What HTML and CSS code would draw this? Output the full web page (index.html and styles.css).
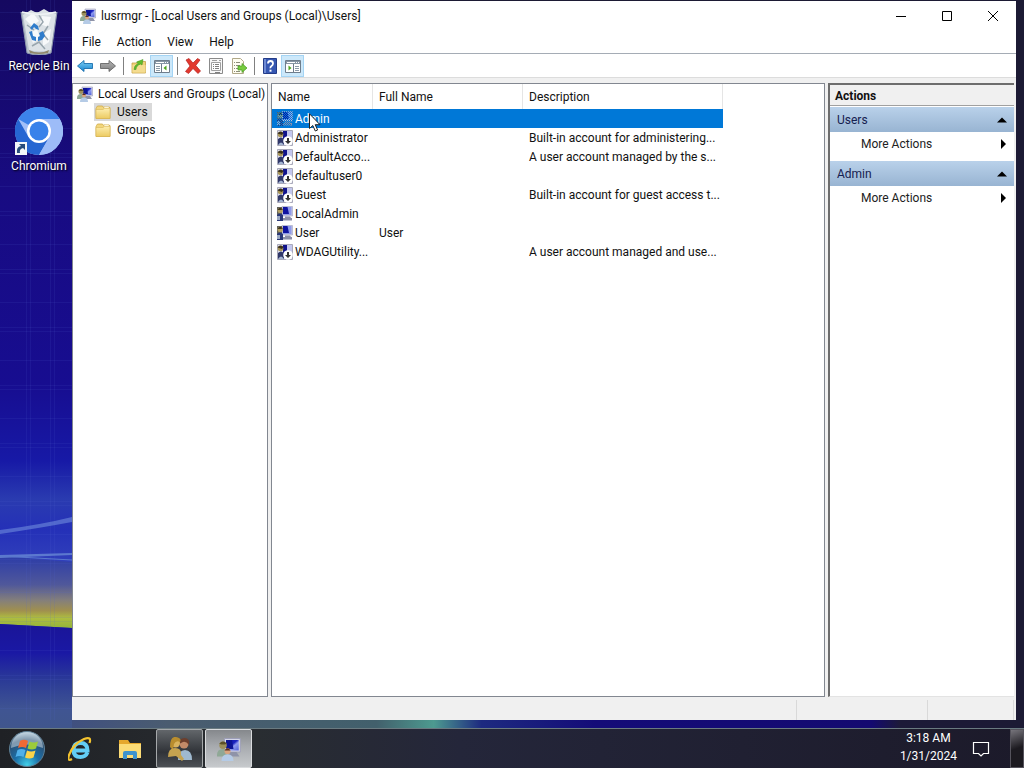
FILE: index.html
```html
<!DOCTYPE html>
<html lang="en">
  <head>
    <meta charset="UTF-8" />
    <meta name="viewport" content="width=device-width, initial-scale=1.0" />
    <title>lusrmgr - [Local Users and Groups (Local)\Users]</title>
    <link rel="stylesheet" href="styles.css">
  </head>
  <body>
    <!-- shared icons -->
    <svg class="sprite" aria-hidden="true">
      <defs>
        <linearGradient id="gScreen" x1="0" y1="0" x2="1" y2="1">
          <stop offset="0" stop-color="#0a14a8" />
          <stop offset=".45" stop-color="#1a22c0" />
          <stop offset=".6" stop-color="#8f9cf0" />
          <stop offset="1" stop-color="#5060d8" />
        </linearGradient>
        <linearGradient id="gFolder" x1="0" y1="0" x2="0" y2="1">
          <stop offset="0" stop-color="#fdeeb0" />
          <stop offset="1" stop-color="#eccb62" />
        </linearGradient>
        <linearGradient id="gBack" x1="0" y1="0" x2="0" y2="1">
          <stop offset="0" stop-color="#7fd0f5" />
          <stop offset="1" stop-color="#1583cf" />
        </linearGradient>
        <linearGradient id="gForward" x1="0" y1="0" x2="0" y2="1">
          <stop offset="0" stop-color="#b5b5b5" />
          <stop offset="1" stop-color="#7d7d7d" />
        </linearGradient>
        <radialGradient id="gOrb" cx=".5" cy=".95" r=".9">
          <stop offset="0" stop-color="#42d0e8" />
          <stop offset=".4" stop-color="#1b6fa8" />
          <stop offset=".8" stop-color="#2c4f72" />
          <stop offset="1" stop-color="#9fb8ca" />
        </radialGradient>
        <pattern id="pDither" width="2" height="2" patternUnits="userSpaceOnUse">
          <path d="M0 0h1v1H0zM1 1h1v1H1z" fill="#0078d7" />
        </pattern>
      </defs>
      <symbol id="user" viewBox="0 0 16 16">
        <path d="M5 1h10.500v9H5z" fill="#d4d6e8" stroke="#9a9cb8" stroke-width=".6" />
        <path d="M6 2h8.500v7H6z" fill="url(#gScreen)" />
        <path d="M6 2h4l1 6H6z" fill="#0c1494" />
        <path d="M8 10h5l2 3H8z" fill="#8f93a8" />
        <circle cx="4" cy="5.500" r="2.500" fill="#9c905c" />
        <path d="M1.500 4.500Q4 1.500 6.500 4.500L5 5H3z" fill="#5c5028" />
        <path d="M0 12q0-4 4-4t4 4v1H0z" fill="#8fa896" />
        <circle cx="7" cy="9.500" r="2" fill="#d8a480" />
        <path d="M5 9Q7 6 9 9z" fill="#5a3020" />
        <path d="M3 16q0-4.500 4-4.500t4 4.500z" fill="#b5cbe6" />
      </symbol>
      <symbol id="account" viewBox="0 0 16 16">
        <path d="M5 .5h10.500v9.500H5z" fill="#c9cae6" stroke="#a0a2c0" stroke-width=".6" />
        <path d="M6 1h8.500v8H6z" fill="#8f9ae8" />
        <path d="M6 1h4.500l1.500 7H6z" fill="#1014a0" />
        <path d="M8 10.500h5l1 1.500h1v2.500H6V12h2z" fill="#8a8ea8" />
        <path d="M0 1h5v8H0z" fill="#60605c" />
        <circle cx="3.200" cy="4.500" r="2.700" fill="#b3a064" />
        <path d="M.5 4Q3 0 6 3.500L4 4z" fill="#40351c" />
        <path d="M0 9q3-3 6 0v6H0z" fill="#293778" />
        <path d="M0 10h3v4H0z" fill="#9ba8c2" />
      </symbol>
      <symbol id="disabled" viewBox="0 0 16 16">
        <path d="M.5.500h15v15H.5z" fill="#dfdfea" stroke="#a9a9ba" />
        <path d="M7 1h8v7H7z" fill="#c3c7ee" />
        <path d="M6 1h4v8H6z" fill="#10138c" />
        <circle cx="3.500" cy="4.500" r="2.800" fill="#a89658" />
        <path d="M.5 3.500Q3 0 6.500 3L5 5z" fill="#3a301c" />
        <path d="M1 9q3-3 6 0v6H1z" fill="#30386a" />
        <path d="M1 15q3-5 6 0z" fill="#a5b5d2" />
        <circle cx="11" cy="11" r="4.800" fill="#fff" />
        <path d="M10 8h2v3h2L11 14l-3-3h2z" fill="#333" />
      </symbol>
      <symbol id="folder" viewBox="0 0 16 16">
        <path d="M1 4.500V14.500h14V3.500H8.500L7.500 2H2.500L1.500 3.500z" fill="#f2d67c" stroke="#cfa945" stroke-width=".8" />
        <path d="M9 2.500h5v2H9z" fill="#fffbe8" stroke="#d9bb66" stroke-width=".5" />
        <path d="M1 5.500h7l1.500-1.200H15v10.200H1z" fill="url(#gFolder)" stroke="#d9b555" stroke-width=".6" />
      </symbol>
    </svg>

    <div class="desktop">
      <svg class="wallpaper" viewBox="0 0 1024 768" preserveAspectRatio="none" aria-hidden="true">
        <defs>
          <linearGradient id="wSky" x1="0" y1="0" x2="0" y2="1">
            <stop offset="0" stop-color="#150960" />
            <stop offset=".25" stop-color="#180b82" />
            <stop offset=".5" stop-color="#170d90" />
            <stop offset=".6" stop-color="#1719a6" />
            <stop offset=".65" stop-color="#2a3bb0" />
            <stop offset=".69" stop-color="#2430b8" />
            <stop offset=".74" stop-color="#3443bb" />
            <stop offset="1" stop-color="#3443bb" />
          </linearGradient>
          <linearGradient id="wGold" x1="0" y1="0" x2="0" y2="1">
            <stop offset="0" stop-color="#2c3ca8" />
            <stop offset=".4" stop-color="#50589a" />
            <stop offset=".62" stop-color="#85807a" />
            <stop offset=".76" stop-color="#a0904e" />
            <stop offset=".86" stop-color="#aebd40" />
            <stop offset="1" stop-color="#94b43a" />
          </linearGradient>
          <linearGradient id="wSea" x1="0" y1="0" x2="0" y2="1">
            <stop offset="0" stop-color="#1a1598" />
            <stop offset=".2" stop-color="#1a18a4" />
            <stop offset=".4" stop-color="#2c3c96" />
            <stop offset=".6" stop-color="#405592" />
            <stop offset="1" stop-color="#405880" />
          </linearGradient>
          <linearGradient id="wFloor" x1="0" y1="0" x2="1" y2="0">
            <stop offset="0" stop-color="#405080" />
            <stop offset=".1" stop-color="#4a5c70" />
            <stop offset=".32" stop-color="#42606c" />
            <stop offset=".38" stop-color="#4d9a90" />
            <stop offset=".43" stop-color="#1d2a80" />
            <stop offset=".55" stop-color="#140c78" />
            <stop offset=".84" stop-color="#140a70" />
            <stop offset=".87" stop-color="#1c1a38" />
            <stop offset="1" stop-color="#1c1a34" />
          </linearGradient>
          <pattern id="wWeave" width="72" height="58" patternUnits="userSpaceOnUse">
            <path d="M26.500 0v58M30.500 0v58M50.500 0v58M54.500 0v58M0 12.500h72M0 37.500h72M0 41.500h72" stroke="#5560d0" stroke-opacity=".12" />
          </pattern>
        </defs>
        <path d="M0 0h1024v768H0z" fill="url(#wSky)" />
        <path d="M0 556L72 562V628L0 624z" fill="url(#wGold)" />
        <path d="M0 624L72 628V768H0z" fill="url(#wSea)" />
        <path d="M0 0h72v720H0z" fill="url(#wWeave)" />
        <path d="M0 530Q40 525 72 517V522Q40 528 0 534z" fill="#6f8cdc" fill-opacity=".6" />
        <path d="M0 555L72 553V555L0 558z" fill="#6888d4" fill-opacity=".8" />
        <path d="M0 556L72 560" stroke="#5a78cc" />
        <path d="M72 720h952v48H72z" fill="url(#wFloor)" />
        <path d="M1012 0h12v768h-12zM72 0h952v2H72z" fill="#1c1a34" />
      </svg>

      <main class="workspace">
        <nav class="shortcuts" aria-label="Desktop">
          <button class="shortcut" type="button">
            <svg class="shortcut-icon" viewBox="0 0 48 48" aria-hidden="true">
              <path d="M6 5L42 5L36 46Q24 50 12 46z" fill="#b9c2cc" />
              <path d="M8 8L16 3L22 6L29 2L34 5L41 7L36 43Q24 46 14 43z" fill="#dce2e6" />
              <path d="M10 12L18 6L24 14L17 19zM27 9L36 10L33 20L25 17zM14 27L22 22L25 31L18 36zM28 26L36 22L34 35L28 39z" fill="#f7f9fa" />
              <path d="M24 8L28 15L24 20M12 18L19 23M33 19L28 27L33 33M17 39L24 35L30 42" fill="none" stroke="#98a5ad" stroke-width="1.500" />
              <path d="M15 21l4-5 4 3 1 4-3-1-2-2-2 3zM14 25l3-1 1 5 3 1v4l-4-1zM24 26l4-2 2 5-3 4-4 1v-4l2-1z" fill="#2f7ccb" />
              <path d="M7 5Q24 10 41 5" fill="none" stroke="#eef2f4" stroke-width="1.500" />
              <path d="M6 5L12 46Q24 50 36 46L42 5" fill="none" stroke="#8e99ad" />
              <path d="M14 43Q24 48 34 43L33 46Q24 48 15 46z" fill="#91886b" />
            </svg>
            Recycle Bin
          </button>
          <button class="shortcut" type="button">
            <svg class="shortcut-icon" viewBox="0 0 48 48" aria-hidden="true">
              <circle cx="24" cy="24" r="24" fill="#a3c0f7" />
              <path d="M24 24L3.200 12A24 24 0 0 1 44.800 12z" fill="#3c83ea" />
              <path d="M3.200 12A24 24 0 0 0 24 48L34.400 30L24 24L13.600 30z" fill="#2666d2" />
              <path d="M24 12H44.800A24 24 0 0 1 24 48L34.400 30z" fill="#9dbcf8" />
              <circle cx="24" cy="24" r="12" fill="#fff" />
              <circle cx="24" cy="24" r="9.500" fill="#3882ea" />
              <path d="M0 35h12v13H0z" fill="#f4f6f8" />
              <path d="M2 46q-1-6 4-7l-2-2h6v6l-2-2q-4 1-3 5z" fill="#274b7c" />
            </svg>
            Chromium
          </button>
        </nav>

        <section class="window">
          <header class="titlebar">
            <svg class="icon" aria-hidden="true"><use href="#user" /></svg>
            <h1 class="title">lusrmgr - [Local Users and Groups (Local)\Users]</h1>
            <button class="caption" type="button" aria-label="Minimize">
              <svg viewBox="0 0 12 12" aria-hidden="true"><path d="M1 6.500h10" /></svg>
            </button>
            <button class="caption" type="button" aria-label="Maximize">
              <svg viewBox="0 0 12 12" aria-hidden="true"><path d="M1.500 1.500h9v9h-9z" /></svg>
            </button>
            <button class="caption" type="button" aria-label="Close">
              <svg viewBox="0 0 12 12" aria-hidden="true"><path d="M1 1l10 10M11 1L1 11" /></svg>
            </button>
          </header>

          <nav class="menubar" aria-label="Menu">
            <button class="menu" type="button">File</button>
            <button class="menu" type="button">Action</button>
            <button class="menu" type="button">View</button>
            <button class="menu" type="button">Help</button>
          </nav>

          <div class="toolbar">
            <button class="tool" type="button" aria-label="Back">
              <svg class="icon" viewBox="0 0 16 16" aria-hidden="true"><path d="M.5 8L7 2.500V5.500h8.500v5H7v3z" fill="url(#gBack)" stroke="#1b6fae" stroke-width=".9" /></svg>
            </button>
            <button class="tool" type="button" aria-label="Forward">
              <svg class="icon" viewBox="0 0 16 16" aria-hidden="true"><path d="M15.500 8L9 2.500V5.500H.5v5H9v3z" fill="url(#gForward)" stroke="#666" stroke-width=".9" /></svg>
            </button>
            <span class="divider"></span>
            <button class="tool" type="button" aria-label="Up one level">
              <svg class="icon" viewBox="0 0 16 16" aria-hidden="true">
                <path d="M1 5h5l1-1.500h7.500V15H1z" fill="#f0d27a" stroke="#c5a24a" stroke-width=".8" />
                <path d="M1.500 7h13v7.500h-13z" fill="#f4dc90" />
                <path d="M3 11.500q0-4 4-6L5.500 4L12 1.500L11 7L9.500 6Q5 7.500 5 11.500z" fill="#62bd2c" stroke="#4a9a28" stroke-width=".6" />
              </svg>
            </button>
            <button class="tool is-pressed" type="button" aria-label="Show/Hide Console Tree" aria-pressed="true">
              <svg class="icon" viewBox="0 0 16 16" aria-hidden="true">
                <path d="M.5 2.500h15v12H.5z" fill="#fff" stroke="#6e7d8c" />
                <path d="M1 3h14v3H1z" fill="#8796a5" />
                <path d="M2 4.500h8M11 4.500h1M13 4.500h1" stroke="#fff" />
                <path d="M7.500 6v8" stroke="#6e7d8c" />
                <path d="M2 8.500h4M2 10.500h4M2 12.500h4" stroke="#8b9aa8" />
                <path d="M12.500 7.500v5L9.500 10z" fill="#4da51e" />
              </svg>
            </button>
            <span class="divider"></span>
            <button class="tool" type="button" aria-label="Delete">
              <svg class="icon" viewBox="0 0 16 16" aria-hidden="true"><path d="M1 2L4 .5L8 5L12.500 .5L15 2L10.800 7.500L15.500 13L13 15.500L8 10.500L3.500 15.500L.5 13.500L5 8z" fill="#e2382e" stroke="#b5201c" stroke-width=".7" /></svg>
            </button>
            <button class="tool" type="button" aria-label="Properties">
              <svg class="icon" viewBox="0 0 16 16" aria-hidden="true">
                <path d="M1.500.500h13v15h-13z" fill="#f8f8f8" stroke="#8a8a8a" />
                <path d="M3.500 4.500h9v8h-9zM4 2.500h5M11 2.500h2" fill="#fff" stroke="#a0a0a0" />
                <path d="M5 6.500h1M7 6.500h4M5 8.500h1M7 8.500h4M5 10.500h1M7 10.500h4M7 14.500h5" stroke="#808080" />
              </svg>
            </button>
            <button class="tool" type="button" aria-label="Export List">
              <svg class="icon" viewBox="0 0 16 16" aria-hidden="true">
                <path d="M1.500.500h8l3 3v12h-11z" fill="#fffdf0" stroke="#b0a888" />
                <path d="M3 4.500h1M5 4.500h4M3 7.500h1M5 7.500h4M3 10.500h1M5 10.500h3M3 13.500h1M5 13.500h4" stroke="#8c8c78" />
                <path d="M7 8h4V5.500L16 10l-5 4.500V12H7z" fill="#77cb3e" stroke="#459b20" stroke-width=".7" />
              </svg>
            </button>
            <span class="divider"></span>
            <button class="tool" type="button" aria-label="Help">
              <svg class="icon" viewBox="0 0 16 16" aria-hidden="true">
                <path d="M1.500.500h13v15h-13z" fill="#3657b2" stroke="#243c88" />
                <path d="M2 1h2v14H2z" fill="#6f8bd4" />
                <path d="M6 5.500Q6 3 8.500 3T11 5.500Q11 7 9.500 8T8.500 10.300" fill="none" stroke="#fff" stroke-width="1.800" />
                <path d="M7.500 11.700h2v2h-2z" fill="#fff" />
              </svg>
            </button>
            <button class="tool is-pressed" type="button" aria-label="Show/Hide Action Pane" aria-pressed="true">
              <svg class="icon" viewBox="0 0 16 16" aria-hidden="true">
                <path d="M.5 2.500h15v12H.5z" fill="#fff" stroke="#6e7d8c" />
                <path d="M1 3h14v3H1z" fill="#8796a5" />
                <path d="M2 4.500h8M11 4.500h1M13 4.500h1" stroke="#fff" />
                <path d="M8.500 6v8" stroke="#6e7d8c" />
                <path d="M10 8.500h4M10 10.500h4M10 12.500h4" stroke="#8b9aa8" />
                <path d="M3.500 7.500v5l3-2.500z" fill="#4da51e" />
              </svg>
            </button>
          </div>

          <div class="panes">
            <nav class="tree" aria-label="Console tree">
              <button class="node" type="button">
                <svg class="icon" aria-hidden="true"><use href="#user" /></svg>
                <span class="node-label">Local Users and Groups (Local)</span>
              </button>
              <ul class="branch">
                <li>
                  <button class="node is-selected" type="button">
                    <svg class="icon" aria-hidden="true"><use href="#folder" /></svg>
                    <span class="node-label">Users</span>
                  </button>
                </li>
                <li>
                  <button class="node" type="button">
                    <svg class="icon" aria-hidden="true"><use href="#folder" /></svg>
                    <span class="node-label">Groups</span>
                  </button>
                </li>
              </ul>
            </nav>

            <div class="list">
              <table class="users">
                <colgroup>
                  <col class="col-name">
                  <col class="col-fullname">
                  <col class="col-description">
                </colgroup>
                <thead>
                  <tr><th>Name</th><th>Full Name</th><th>Description</th></tr>
                </thead>
                <tbody>
                  <tr class="is-selected">
                    <td><div class="name"><svg class="icon" viewBox="0 0 16 16" aria-hidden="true"><use href="#account" /><path d="M0 0h16v10H0zM0 10h14v5H0z" fill="url(#pDither)" /></svg>Admin</div></td>
                    <td></td><td></td>
                  </tr>
                  <tr>
                    <td><div class="name"><svg class="icon" aria-hidden="true"><use href="#disabled" /></svg>Administrator</div></td>
                    <td></td><td>Built-in account for administering...</td>
                  </tr>
                  <tr>
                    <td><div class="name"><svg class="icon" aria-hidden="true"><use href="#disabled" /></svg>DefaultAcco...</div></td>
                    <td></td><td>A user account managed by the s...</td>
                  </tr>
                  <tr>
                    <td><div class="name"><svg class="icon" aria-hidden="true"><use href="#disabled" /></svg>defaultuser0</div></td>
                    <td></td><td></td>
                  </tr>
                  <tr>
                    <td><div class="name"><svg class="icon" aria-hidden="true"><use href="#disabled" /></svg>Guest</div></td>
                    <td></td><td>Built-in account for guest access t...</td>
                  </tr>
                  <tr>
                    <td><div class="name"><svg class="icon" aria-hidden="true"><use href="#account" /></svg>LocalAdmin</div></td>
                    <td></td><td></td>
                  </tr>
                  <tr>
                    <td><div class="name"><svg class="icon" aria-hidden="true"><use href="#account" /></svg>User</div></td>
                    <td>User</td><td></td>
                  </tr>
                  <tr>
                    <td><div class="name"><svg class="icon" aria-hidden="true"><use href="#disabled" /></svg>WDAGUtility...</div></td>
                    <td></td><td>A user account managed and use...</td>
                  </tr>
                </tbody>
              </table>
            </div>

            <aside class="actions">
              <h2 class="actions-title">Actions</h2>
              <button class="group" type="button" aria-expanded="true">
                Users
                <svg class="arrow" viewBox="0 0 10 10" aria-hidden="true"><path d="M0 7.500L5 2.500L10 7.500z" /></svg>
              </button>
              <button class="action" type="button">
                More Actions
                <svg class="arrow" viewBox="0 0 10 10" aria-hidden="true"><path d="M3 0L8 5L3 10z" /></svg>
              </button>
              <button class="group" type="button" aria-expanded="true">
                Admin
                <svg class="arrow" viewBox="0 0 10 10" aria-hidden="true"><path d="M0 7.500L5 2.500L10 7.500z" /></svg>
              </button>
              <button class="action" type="button">
                More Actions
                <svg class="arrow" viewBox="0 0 10 10" aria-hidden="true"><path d="M3 0L8 5L3 10z" /></svg>
              </button>
            </aside>
          </div>

          <footer class="statusbar">
            <span class="status-text"></span>
            <span class="status-cell"></span>
            <span class="status-end"></span>
          </footer>
        </section>
      </main>

      <footer class="taskbar">
        <button class="start" type="button" aria-label="Start">
          <svg viewBox="0 0 36 36" aria-hidden="true">
            <circle cx="18" cy="18" r="17.500" fill="url(#gOrb)" stroke="#5f8096" />
            <path d="M2 17A16 16 0 0 1 34 17Q18 10 2 17z" fill="#d5e3ec" fill-opacity=".5" />
            <path d="M11 10q4-2.500 8 0l-2 7q-4-2-8 0z" fill="#ef6a35" />
            <path d="M20.500 10.500q4 2 8.500 0l-2 7q-4 2-8.500 0z" fill="#9ccb3b" />
            <path d="M8.500 19q4-2 8 0l-2 7q-4-2-8 0z" fill="#4fb0ea" />
            <path d="M18 19.500q4 2 8.500 0l-2 7q-4 2-8.500 0z" fill="#fbd34a" />
          </svg>
        </button>
        <button class="pin" type="button" aria-label="Internet Explorer">
          <svg viewBox="2 2 24 24" aria-hidden="true">
            <path d="M21.500 17.500Q19.500 22 14.500 22Q7.500 22 7.500 15T14.500 8Q21.500 8 21.500 15.500H8.500" fill="none" stroke="#62cdf5" stroke-width="4" />
            <path d="M6 24Q1 27 3 20Q7 9 18 4Q26 1 23.500 8" fill="none" stroke="#f3c32f" stroke-width="2.200" />
          </svg>
        </button>
        <button class="pin" type="button" aria-label="File Explorer">
          <svg viewBox="2 2 24 24" aria-hidden="true">
            <path d="M3 5h9l2 3h11v4H3z" fill="#e5a82c" />
            <path d="M3 9h22v14H3z" fill="#fbdc76" />
            <path d="M7 24v-6q0-2 2-2h10q2 0 2 2v6h-4v-4h-6v4z" fill="#3d93cd" />
          </svg>
        </button>
        <button class="task" type="button" aria-label="User accounts">
          <svg viewBox="2 2 24 24" aria-hidden="true">
            <circle cx="18" cy="9" r="4.500" fill="#c28a68" />
            <path d="M13 9q0-6 5.500-6T23 10q-3-4-6-3z" fill="#6d3e2c" />
            <path d="M12 25q0-10 7-10t7 10z" fill="#9fb9cf" />
            <circle cx="9.500" cy="8" r="4.500" fill="#d9b35e" />
            <path d="M4 12Q4 1 10 2T14 7q-4-2-6 2l-1 6z" fill="#b98d2e" />
            <path d="M2 22q0-9 7-9t6 7l3 4-2 2-6-5z" fill="#c5a350" />
          </svg>
        </button>
        <button class="task is-active" type="button" aria-label="lusrmgr">
          <svg viewBox="0 0 16 16" aria-hidden="true"><use href="#user" /></svg>
        </button>
        <time class="clock" datetime="2024-01-31T03:18">3:18 AM<br>1/31/2024</time>
        <button class="notices" type="button" aria-label="Notifications">
          <svg viewBox="0 0 18 18" aria-hidden="true"><path d="M1.500 2.500h15v11h-5l-2.500 2.500l-2.500-2.500h-5z" fill="none" stroke="#fff" stroke-width="1.200" /></svg>
        </button>
        <button class="show-desktop" type="button" aria-label="Show desktop"></button>
      </footer>

      <svg class="cursor" viewBox="0 0 12 19" aria-hidden="true"><path d="M.5.800V15.500L3.800 12.500L6.300 18L8.600 17L6.200 11.700H11z" fill="#fff" stroke="#222" /></svg>
    </div>
  </body>
</html>
```
FILE: styles.css
```css
*,
*::after,
*::before {
  box-sizing: border-box;
}

body {
  margin: 0;
  font-family: Roboto, "Open Sans", sans-serif;
  font-size: 12px;
  line-height: 18px;
  color: #111;
}

button {
  margin: 0;
  padding: 0;
  border: 0;
  background: none;
  font: inherit;
  color: inherit;
  text-align: left;
}

svg {
  display: block;
  flex: none;
}

.sprite {
  position: absolute;
  width: 0;
  height: 0;
}

.icon {
  width: 16px;
  height: 16px;
}

/* desktop */
.desktop {
  position: relative;
  display: flex;
  flex-direction: column;
  height: 100vh;
  overflow: hidden;
}

.wallpaper {
  position: absolute;
  inset: 0;
  width: 100%;
  height: 100%;
  z-index: -1;
}

.workspace {
  flex: 1;
  display: flex;
  min-height: 0;
  padding: 1px 8px 8px 0;
}

.shortcuts {
  width: 72px;
  flex: none;
  display: flex;
  flex-direction: column;
  gap: 32px;
  padding: 6px 0 0 6px;
}

.shortcut {
  display: flex;
  flex-direction: column;
  align-items: center;
  gap: 2px;
  color: #fff;
  white-space: nowrap;
  text-shadow: 1px 1px 2px #000;
}

.shortcut-icon {
  width: 48px;
  height: 48px;
}

/* window */
.window {
  flex: 1;
  min-width: 0;
  display: flex;
  flex-direction: column;
  background: #f0f0f0;
}

.titlebar {
  display: flex;
  align-items: center;
  height: 30px;
  padding-left: 8px;
  background: #fff;
}

.title {
  flex: 1;
  margin: 0;
  padding-left: 5px;
  font-size: 12px;
  font-weight: 400;
  white-space: nowrap;
}

.caption {
  display: grid;
  place-items: center;
  width: 46px;
  height: 100%;
}

.caption svg {
  width: 12px;
  height: 12px;
  fill: none;
  stroke: #000;
}

.menubar {
  display: flex;
  height: 23px;
  padding-left: 2px;
  background: #fff;
  border-bottom: 1px solid #a5acb5;
}

.menu {
  padding: 0 8px;
}

.toolbar {
  display: flex;
  align-items: center;
  height: 24px;
  padding: 1px 0 0 1px;
  background: #fff;
  border-bottom: 1px solid #dcdcdc;
}

.tool {
  display: grid;
  place-items: center;
  width: 23px;
  height: 22px;
}

.tool.is-pressed {
  background: #cce8fa;
  border: 1px solid #a4d4f4;
}

.divider {
  width: 1px;
  height: 18px;
  margin: 0 3px 0 4px;
  background: #808080;
}

.panes {
  flex: 1;
  min-height: 0;
  display: flex;
  gap: 3px;
  padding: 5px 2px 0 0;
}

/* console tree */
.tree {
  width: 196px;
  flex: none;
  padding: 1px 0 0 4px;
  background: #fff;
  border: 1px solid #828790;
}

.branch {
  margin: 0;
  padding: 0 0 0 17px;
  list-style: none;
}

.node {
  display: flex;
  align-items: center;
  height: 18px;
  white-space: nowrap;
}

.node-label {
  padding: 0 4px 0 5px;
}

.branch .icon {
  width: 18px;
}

.node.is-selected {
  background: #d9d9d9;
}

/* users list */
.list {
  flex: 1;
  min-width: 0;
  background: #fff;
  border: 1px solid #828790;
}

.users {
  width: 451px;
  table-layout: fixed;
  border-collapse: separate;
  border-spacing: 0;
}

.col-name {
  width: 101px;
}

.col-fullname {
  width: 150px;
}

.col-description {
  width: 200px;
}

.users th,
.users td {
  padding: 0 0 0 6px;
  font-weight: 400;
  text-align: left;
  white-space: nowrap;
}

.users th {
  height: 25px;
  border-right: 1px solid #e5e5e5;
}

.users td {
  height: 19px;
}

.users td:first-child {
  padding-left: 5px;
}

.users .is-selected {
  background: #0078d7;
  color: #fff;
}

.name {
  display: flex;
  align-items: center;
  gap: 2px;
}

/* actions pane */
.actions {
  width: 186px;
  flex: none;
  display: flex;
  flex-direction: column;
  background: #fff;
  border-top: 2px solid #6d6d6d;
  border-left: 2px solid #6d6d6d;
  border-bottom: 1px solid #e3e3e3;
}

.actions-title {
  height: 21px;
  margin: 0 0 1px;
  padding: 2px 5px 0;
  font-size: 12px;
  font-weight: 700;
  line-height: 18px;
  background: #f0f0f0;
  border-bottom: 1px solid #a0a0a0;
}

.group,
.action {
  display: flex;
  align-items: center;
  justify-content: space-between;
  padding: 0 7px;
}

.group {
  height: 25px;
  color: #15204f;
  background: linear-gradient(#b9d1ea, #98b4d2);
}

.action {
  height: 24px;
  margin-bottom: 5px;
  padding: 0 6px 0 31px;
  color: #222;
}

.arrow {
  width: 10px;
  height: 10px;
  fill: #000;
}

/* status bar */
.statusbar {
  display: flex;
  height: 23px;
  padding: 3px 2px 0 0;
}

.status-text {
  flex: 1;
}

.status-cell {
  width: 132px;
  border-left: 1px solid #d9d9d9;
  border-right: 1px solid #d9d9d9;
}

.status-end {
  width: 86px;
  border-right: 1px solid #d9d9d9;
}

/* taskbar */
.taskbar {
  display: flex;
  height: 40px;
  flex: none;
  padding-left: 4px;
  background: linear-gradient(90deg, #1f2125, #292d31 25%, #24263a 45%, #1c1a2a);
  border-top: 1px solid #6a7a80;
}

.start,
.pin {
  display: grid;
  place-items: center;
}

.start {
  width: 46px;
  margin-right: 4px;
}

.start svg {
  width: 36px;
  height: 36px;
}

.pin {
  width: 52px;
}

.pin svg,
.task svg {
  width: 24px;
  height: 24px;
}

.pin + .pin {
  width: 48px;
}

.task {
  display: grid;
  place-items: center;
  width: 47px;
  margin-left: 2px;
  background: linear-gradient(#62666a, #303338 60%, #4c5055);
  border: 1px solid #a5a8aa;
  border-radius: 2px;
}

.task.is-active {
  background: linear-gradient(#85888c, #a8abaf 45%, #c6c9cc);
  border-color: #dadcde;
}

.clock {
  margin-left: auto;
  color: #fff;
  text-align: center;
}

.notices {
  display: grid;
  place-items: center;
  width: 48px;
}

.notices svg {
  width: 18px;
  height: 18px;
}

.show-desktop {
  width: 14px;
  margin-left: 5px;
  background: linear-gradient(160deg, #77757c, #1c1a20 50%);
  border: 1px solid #55535c;
}

/* pointer over the Admin row */
.cursor {
  position: absolute;
  left: 309px;
  top: 113px;
  width: 12px;
  height: 19px;
}
```
